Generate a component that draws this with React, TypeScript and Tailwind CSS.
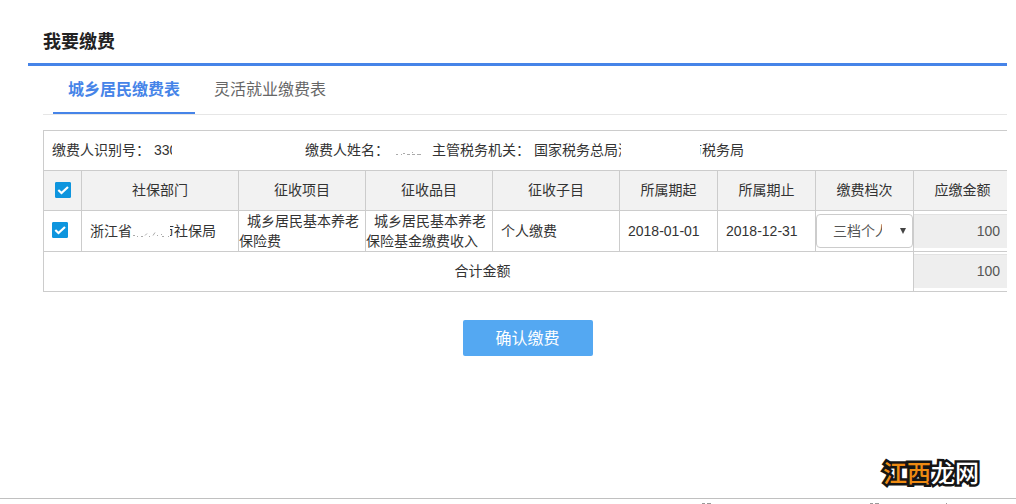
import { useState } from 'react'
import type { ReactNode } from 'react'

const TABS = ['城乡居民缴费表', '灵活就业缴费表']

const COLUMNS = [
  { label: '社保部门', width: 'w-[157px]' },
  { label: '征收项目', width: 'w-[127px]' },
  { label: '征收品目', width: 'w-[127px]' },
  { label: '征收子目', width: 'w-[127px]' },
  { label: '所属期起', width: 'w-[98px]' },
  { label: '所属期止', width: 'w-[98px]' },
  { label: '缴费档次', width: 'w-[98px]' },
  { label: '应缴金额', width: '' },
]

type CheckBoxProps = {
  label: string
  checked: boolean
  onChange: (next: boolean) => void
}

function CheckBox({ label, checked, onChange }: CheckBoxProps) {
  return (
    <span className="relative inline-block size-4 align-middle">
      <input
        type="checkbox"
        aria-label={label}
        checked={checked}
        onChange={(e) => onChange(e.target.checked)}
        className="peer block size-4 appearance-none rounded-[1px] border border-[#0e95de] bg-white checked:bg-[#0e95de]"
      />
      <svg
        viewBox="0 0 16 16"
        className="pointer-events-none absolute inset-0 hidden size-4 peer-checked:block"
      >
        <path d="M3.3 8 6.5 11 13 5" fill="none" stroke="#fff" strokeWidth="2.2" />
      </svg>
    </span>
  )
}

/** Cuts its content off at the given width, for values that are masked. */
function Clip({ width, end, children }: { width: string; end?: boolean; children: ReactNode }) {
  return (
    <span className={`flex overflow-hidden whitespace-nowrap ${width} ${end ? 'justify-end' : ''}`}>
      {children}
    </span>
  )
}

/** Traces left under a masked value. */
function Traces({ className, d }: { className: string; d: string }) {
  return (
    <svg className={`h-5 shrink-0 ${className}`} fill="none" stroke="#aaa" strokeWidth="1">
      <path d={d} />
    </svg>
  )
}

function AmountInput({ label, value }: { label: string; value: string }) {
  return (
    <input
      type="text"
      readOnly
      aria-label={label}
      value={value}
      className="block h-[34px] w-full border-t border-[#e2e2e2] bg-[#eee] pr-[11px] pb-px text-right text-sm text-[#555] outline-none"
    />
  )
}

function PaymentTable() {
  const [checked, setChecked] = useState(true)
  const [level, setLevel] = useState('3')
  const cell = 'border border-[#ccc]'

  return (
    <table className="w-full table-fixed border-collapse text-sm leading-5 text-[#333]">
      <colgroup>
        <col className="w-[38px]" />
        {COLUMNS.map((c) => (
          <col key={c.label} className={c.width} />
        ))}
      </colgroup>
      <thead>
        <tr className="h-10">
          <td colSpan={9} className={`${cell} pb-0.5 pl-2`}>
            <div className="flex">
              <div className="flex w-[253px] gap-1">
                <span>缴费人识别号：</span>
                <Clip width="w-[18px]">330</Clip>
              </div>
              <div className="flex w-[127px] gap-1">
                <span>缴费人姓名：</span>
                <Traces
                  className="w-8"
                  d="M3 14.5h2M8 14.5h1M10 13.5h2M14 14.5h3M19 12.5h1M19 14.5h3M24 14.5h4"
                />
              </div>
              <div className="flex">
                <span className="mr-1">主管税务机关：</span>
                <span>国家税务总局</span>
                <Clip width="w-[3px]">浙</Clip>
                <span className="w-[79px]" />
                <Clip width="w-[2px]" end>
                  市
                </Clip>
                <span>税务局</span>
              </div>
            </div>
          </td>
        </tr>
        <tr className="h-10 bg-[#f2f2f2]">
          <th className={`${cell} pb-0.5`}>
            <div className="flex justify-center">
              <CheckBox label="全选" checked={checked} onChange={setChecked} />
            </div>
          </th>
          {COLUMNS.map((c) => (
            <th key={c.label} className={`${cell} pb-0.5 font-normal`}>
              {c.label}
            </th>
          ))}
        </tr>
      </thead>
      <tbody>
        <tr>
          <td className={`${cell} pb-0.5 pl-2`}>
            <div className="flex">
              <CheckBox label="选择" checked={checked} onChange={setChecked} />
            </div>
          </td>
          <td className={`${cell} pl-2`}>
            <div className="flex">
              <span>浙江省</span>
              <Traces
                className="w-[38px]"
                d="M1 14.5h2M5 15.5h1M9 15.5h2M13 14.5l2-2M17 15.5h1M21 14.5l2-3M25 14.5h1M29 13.5h1M30 15.5h2M36 15.5h1"
              />
              <Clip width="w-1" end>
                市
              </Clip>
              <span>社保局</span>
            </div>
          </td>
          <td className={`${cell} indent-2`}>城乡居民基本养老保险费</td>
          <td className={`${cell} indent-2`}>城乡居民基本养老保险基金缴费收入</td>
          <td className={`${cell} pl-2`}>个人缴费</td>
          <td className={`${cell} pl-2`}>2018-01-01</td>
          <td className={`${cell} pl-2`}>2018-12-31</td>
          <td className={cell}>
            <div className="relative">
              <select
                aria-label="缴费档次"
                value={level}
                onChange={(e) => setLevel(e.target.value)}
                className="block h-[34px] w-full appearance-none rounded border border-[#ccc] bg-white pr-[30px] pl-4 text-sm text-[#555]"
              >
                <option value="3">三档个人</option>
              </select>
              <svg
                viewBox="0 0 6 6"
                className="pointer-events-none absolute top-[14px] right-[7px] size-[6px]"
              >
                <path d="M0 0h6L3 6z" fill="#444" />
              </svg>
            </div>
          </td>
          <td className={cell}>
            <AmountInput label="应缴金额" value="100" />
          </td>
        </tr>
        <tr className="h-10">
          <td colSpan={8} className={`${cell} pb-0.5 pl-2 text-center`}>
            合计金额
          </td>
          <td className={`${cell} pb-0.5`}>
            <AmountInput label="合计金额" value="100" />
          </td>
        </tr>
      </tbody>
    </table>
  )
}

export default function App() {
  const [tab, setTab] = useState(0)

  return (
    <div className="flex min-h-screen flex-col bg-white font-['Liberation_Sans','Noto_Sans_CJK_SC',sans-serif]">
      <main className="mr-[9px] ml-7 grow overflow-hidden">
        <h1 className="border-b-[3px] border-[#4684e8] pt-[30px] pb-[9px] pl-[15px] text-lg leading-6 font-bold text-[#222]">
          我要缴费
        </h1>

        <div className="-mr-[5px] pl-[15px]">
          <nav className="flex gap-1 border-b border-[#e6e6e6] pl-[10px]">
            {TABS.map((name, i) => (
              <button
                key={name}
                type="button"
                onClick={() => setTab(i)}
                className={`h-12 border-b-2 px-[15px] pt-0.5 text-base leading-6 ${
                  i === tab
                    ? 'border-[#4684e8] font-bold text-[#4684e8]'
                    : 'border-transparent text-[#666]'
                }`}
              >
                {name}
              </button>
            ))}
          </nav>

          <div className="mt-[15px]">
            <PaymentTable />
          </div>

          <div className="mt-7 flex justify-center">
            <button
              type="button"
              className="h-9 w-[130px] rounded-xs bg-[#54a8f2] pt-0.5 text-base text-white"
            >
              确认缴费
            </button>
          </div>
        </div>
      </main>

      <footer>
        <div className="flex justify-end pr-[37px] pb-2 text-2xl leading-8 font-medium text-white [paint-order:stroke] [-webkit-text-stroke:5px_#151515]">
          <span className="text-[#ee8a12]">江西</span>
          <span>龙网</span>
        </div>
        <div className="flex h-[6px] justify-end border-t border-[#c0c0c0]">
          <svg className="h-[5px] w-80" fill="none" stroke="#999">
            <path d="M6 4.5h3M11 4.5h4M174 4.5h3M179 4.5h4M250 4.5h1" />
          </svg>
        </div>
      </footer>
    </div>
  )
}
